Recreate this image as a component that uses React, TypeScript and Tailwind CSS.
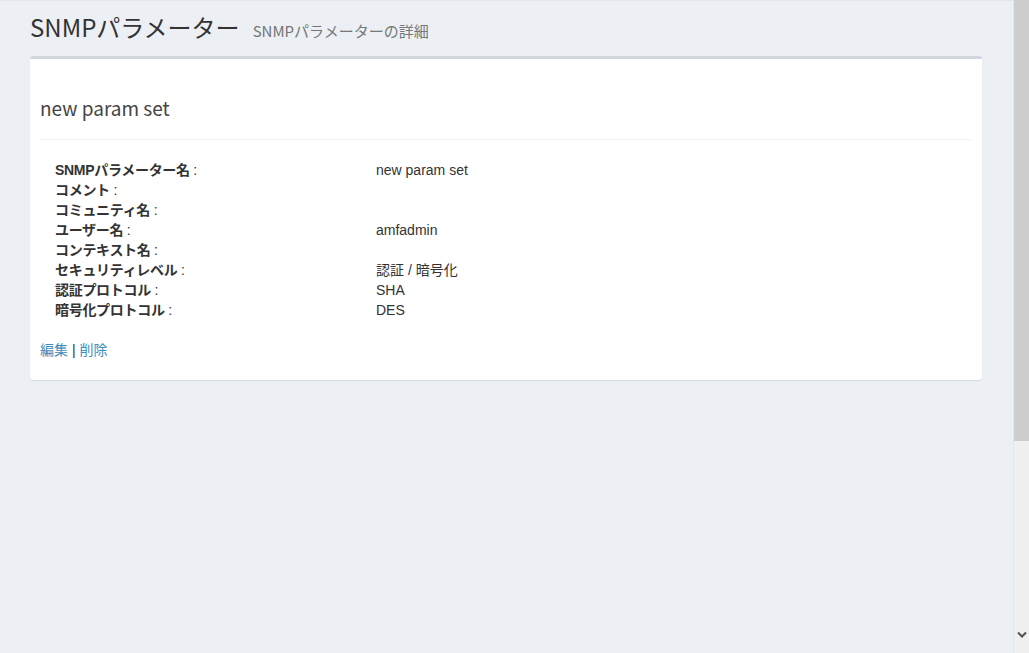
const FONT = { fontFamily: '"Liberation Sans", "Noto Sans CJK JP", sans-serif' }

const rows: [string, string][] = [
    ["SNMPパラメーター名", "new param set"],
    ["コメント", ""],
    ["コミュニティ名", ""],
    ["ユーザー名", "amfadmin"],
    ["コンテキスト名", ""],
    ["セキュリティレベル", "認証 / 暗号化"],
    ["認証プロトコル", "SHA"],
    ["暗号化プロトコル", "DES"],
]

function Scrollbar() {
    return (
        <div className="w-[16px] h-full flex flex-col bg-[#f0f0f0] border-l border-[#e6e6e6]">
            <div className="h-[441px] bg-[#cdcdcd]" />
            <div className="flex-1" />
            <div className="h-[22px] flex items-start justify-center">
                <svg width="10" height="8" viewBox="0 0 10 8">
                    <path d="M1 1.5 L5 5.5 L9 1.5" fill="none" stroke="#505050" strokeWidth="2" />
                </svg>
            </div>
        </div>
    )
}

export default function App() {
    return (
        <div className="w-[1029px] h-[653px] flex bg-[#ecf0f5] overflow-hidden text-[#333]" style={FONT}>
            <div className="flex-1 px-[30px] pr-[31px] border-t border-[#e2e6ec]">
                <div className="pt-[13px] flex items-baseline gap-[13px]">
                    <h1 className="text-[24px] leading-[26px] text-[#333]" style={{ fontFamily: '"Noto Sans CJK JP", sans-serif' }}>
                        SNMPパラメーター
                    </h1>
                    <span className="text-[15px] text-[#777]" style={{ fontFamily: '"Noto Sans CJK JP", sans-serif' }}>
                        SNMPパラメーターの詳細
                    </span>
                </div>

                <div className="mt-[13px] border-t-[3px] border-[#d2d6de] bg-white rounded-[3px] shadow-[0_1px_1px_rgba(0,0,0,0.1)]">
                    <div className="mx-[10px] pt-[37px] pb-[19px] border-b border-[#f4f4f4]">
                        <h3 className="text-[19px] leading-[24px] text-[#444]" style={{ fontFamily: '"Noto Sans CJK JP", sans-serif' }}>
                            new param set
                        </h3>
                    </div>
                    <div className="pt-[20px] pl-[25px] grid grid-cols-[321px_1fr] text-[14px] leading-[20px]">
                        {rows.map(([label, value]) => (
                            <div key={label} className="contents">
                                <div className="font-bold tracking-[-0.3px]">{label} <span className="font-normal">:</span></div>
                                <div>{value}</div>
                            </div>
                        ))}
                    </div>
                    <div className="px-[10px] pt-[20px] pb-[20px] text-[14px] leading-[20px]">
                        <a className="text-[#3c8dbc]">編集</a>
                        <span> | </span>
                        <a className="text-[#3c8dbc]">削除</a>
                    </div>
                </div>
            </div>
            <Scrollbar />
        </div>
    )
}
